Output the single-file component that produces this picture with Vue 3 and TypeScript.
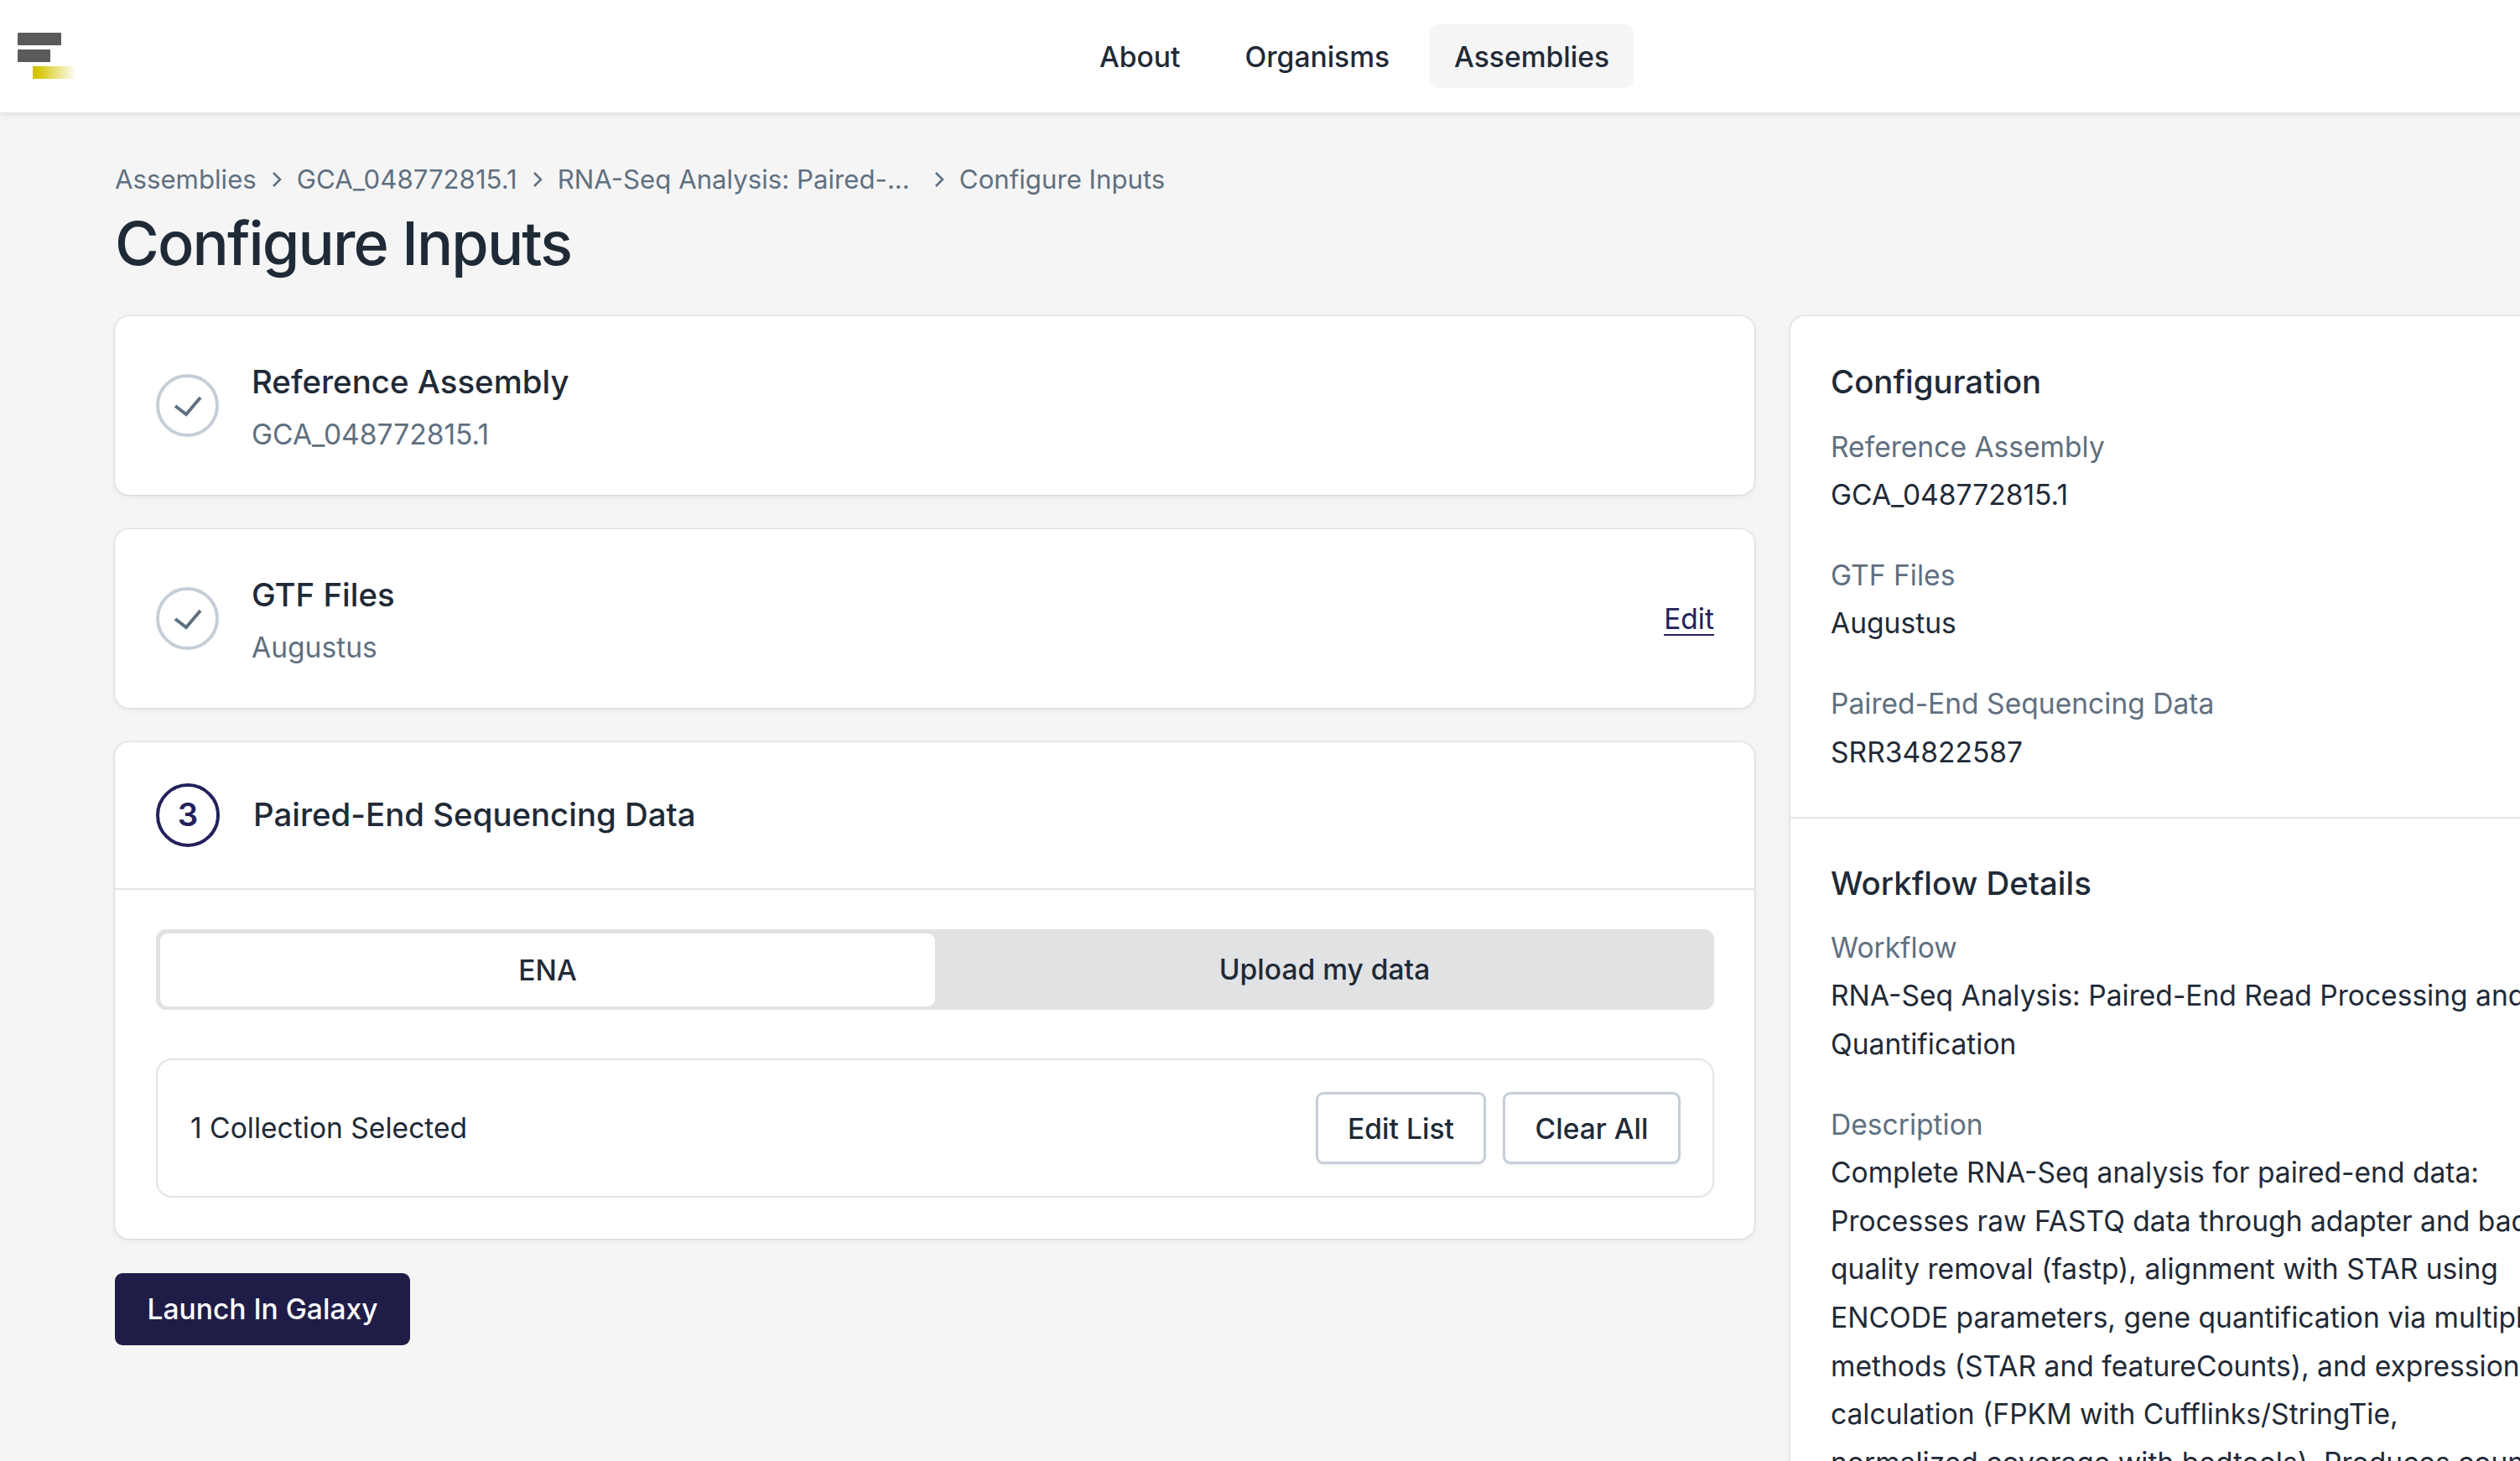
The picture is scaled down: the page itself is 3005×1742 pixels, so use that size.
<script setup lang="ts">
const navItems = [
  { label: 'About', active: false },
  { label: 'Organisms', active: false },
  { label: 'Assemblies', active: true }
]

const crumbs = ['Assemblies', 'GCA_048772815.1', 'RNA-Seq Analysis: Paired-...', 'Configure Inputs']

const doneSteps = [
  { title: 'Reference Assembly', value: 'GCA_048772815.1', editable: false },
  { title: 'GTF Files', value: 'Augustus', editable: true }
]

const configuration = [
  { label: 'Reference Assembly', value: 'GCA_048772815.1' },
  { label: 'GTF Files', value: 'Augustus' },
  { label: 'Paired-End Sequencing Data', value: 'SRR34822587' }
]

const details = [
  { label: 'Workflow', value: 'RNA-Seq Analysis: Paired-End Read Processing and Quantification' },
  {
    label: 'Description',
    value:
      'Complete RNA-Seq analysis for paired-end data: Processes raw FASTQ data through adapter and bad quality removal (fastp), alignment with STAR using ENCODE parameters, gene quantification via multiple methods (STAR and featureCounts), and expression calculation (FPKM with Cufflinks/StringTie, normalized coverage with bedtools). Produces count tables.'
  }
]
</script>

<template>
  <div class="page">
    <!-- Header -->
    <header class="topbar">
      <svg class="logo" width="72" height="57" viewBox="0 0 72 57">
        <defs>
          <linearGradient id="logo-fade" x1="0" x2="1" y1="0" y2="0">
            <stop offset="0.1" stop-color="#d4c400" />
            <stop offset="1" stop-color="#d4c400" stop-opacity="0" />
          </linearGradient>
        </defs>
        <rect x="0" y="0" width="52" height="15" rx="1" fill="#5a5a5c" />
        <rect x="0" y="20" width="39" height="15" rx="1" fill="#5a5a5c" />
        <rect x="18" y="40" width="52" height="15" rx="1" fill="url(#logo-fade)" />
      </svg>
      <nav class="nav">
        <a v-for="item in navItems" :key="item.label" :class="['nav-item', { active: item.active }]">{{ item.label }}</a>
      </nav>
    </header>

    <main class="content">
      <div class="breadcrumb">
        <template v-for="(crumb, i) in crumbs" :key="crumb">
          <span :class="['crumb', { truncated: i === 2 }]">{{ crumb }}</span>
          <svg v-if="i < crumbs.length - 1" class="chevron" width="12" height="20" viewBox="0 0 12 20">
            <path d="M2 2l8 8-8 8" fill="none" stroke="currentColor" stroke-width="2.6" />
          </svg>
        </template>
      </div>
      <h1 class="title">Configure Inputs</h1>

      <div class="columns">
        <section class="steps">
          <div v-for="step in doneSteps" :key="step.title" class="card step-done">
            <span class="check">
              <svg width="34" height="26" viewBox="0 0 34 26">
                <path d="M2 13l13 10L32 3" fill="none" stroke="currentColor" stroke-width="4" />
              </svg>
            </span>
            <div class="step-text">
              <div class="step-title">{{ step.title }}</div>
              <div class="step-value">{{ step.value }}</div>
            </div>
            <a v-if="step.editable" class="edit">Edit</a>
          </div>

          <div class="card">
            <div class="step-head">
              <span class="step-num">3</span>
              <span class="step-title">Paired-End Sequencing Data</span>
            </div>
            <div class="step-body">
              <div class="toggle">
                <div class="toggle-item on">ENA</div>
                <div class="toggle-item">Upload my data</div>
              </div>
              <div class="selection">
                <span>1 Collection Selected</span>
                <div class="selection-actions">
                  <button class="outline-btn edit-list">Edit List</button>
                  <button class="outline-btn clear-all">Clear All</button>
                </div>
              </div>
            </div>
          </div>

          <button class="launch">Launch In Galaxy</button>
        </section>

        <aside class="card side">
          <div class="side-block first">
            <h2 class="side-title">Configuration</h2>
            <dl class="side-list">
              <div v-for="row in configuration" :key="row.label">
                <dt>{{ row.label }}</dt>
                <dd>{{ row.value }}</dd>
              </div>
            </dl>
          </div>
          <div class="side-block bordered">
            <h2 class="side-title">Workflow Details</h2>
            <dl class="side-list">
              <div v-for="row in details" :key="row.label">
                <dt>{{ row.label }}</dt>
                <dd>{{ row.value }}</dd>
              </div>
            </dl>
          </div>
        </aside>
      </div>
    </main>
  </div>
</template>

<style>
html,
body {
  margin: 0;
  height: 1742px;
  overflow: hidden;
  background: #f5f5f5;
}
</style>

<style scoped>
.page {
  width: 3228px;
  height: 1742px;
  overflow: hidden;
  font-family: Inter, 'Liberation Sans', sans-serif;
  font-size: 33.6px;
  line-height: 57.6px;
  color: #1f2a37;
  background: #f5f5f5;
}

.topbar {
  display: flex;
  align-items: center;
  height: 134px;
  padding-left: 21px;
  background: #fff;
  box-shadow: 0 2px 8px rgba(0, 0, 0, 0.1);
}

.logo {
  display: block;
  margin-top: 1px;
}

.nav {
  display: flex;
  gap: 19px;
  margin-left: 1189px;
}

.nav-item {
  padding: 10px 29px 9px;
  border-radius: 11px;
  font-weight: 500;
}

.nav-item.active {
  background: #f5f5f5;
}

.content {
  padding: 56px 137px 0;
}

.breadcrumb {
  display: flex;
  align-items: center;
  gap: 18px;
  font-size: 31.2px;
  line-height: 48px;
  color: #5f7080;
}

.crumb.truncated {
  padding-right: 11px;
}

.chevron {
  flex: none;
}

.title {
  margin: 8px 0 0;
  font-size: 72px;
  line-height: 88px;
  letter-spacing: -1.9px;
  font-weight: 500;
  color: #1f2a37;
}

.columns {
  display: grid;
  grid-template-columns: 1955px 958px;
  gap: 43px;
  margin-top: 43px;
  align-items: start;
}

.steps {
  display: flex;
  flex-direction: column;
  align-items: stretch;
  gap: 41px;
}

.card {
  background: #fff;
  border-radius: 17px;
  box-shadow: 0 0 3px rgba(0, 0, 0, 0.2), 0 3px 8px rgba(0, 0, 0, 0.05);
}

.step-done {
  display: flex;
  align-items: center;
  gap: 39px;
  height: 213px;
  padding: 0 48px 0 49px;
  box-sizing: border-box;
}

.check {
  flex: none;
  display: flex;
  align-items: center;
  justify-content: center;
  width: 75px;
  height: 75px;
  box-sizing: border-box;
  border: 4px solid #c5ced8;
  border-radius: 50%;
  color: #5f7080;
}

.step-text {
  flex: 1;
  padding-top: 6px;
}

.step-title {
  font-size: 38.4px;
  font-weight: 500;
}

.step-value {
  margin-top: 4px;
  color: #5f7080;
}

.edit {
  color: #23215c;
  text-decoration: underline;
  text-decoration-thickness: 2px;
  text-underline-offset: 6px;
}

.step-head {
  display: flex;
  align-items: center;
  gap: 40px;
  height: 174px;
  padding: 0 49px;
  border-bottom: 2px solid #e2e3e5;
}

.step-num {
  flex: none;
  display: flex;
  align-items: center;
  justify-content: center;
  width: 76px;
  height: 76px;
  box-sizing: border-box;
  border: 4px solid #23215c;
  border-radius: 50%;
  font-size: 38.4px;
  font-weight: 600;
  color: #23215c;
}

.step-body {
  padding: 47px 48px 49px 49px;
}

.toggle {
  display: grid;
  grid-template-columns: 1fr 1fr;
  height: 96px;
  border-radius: 12px;
  background: #e1e2e4;
}

.toggle-item {
  display: flex;
  align-items: center;
  justify-content: center;
  font-weight: 500;
  border-radius: 9px;
}

.toggle-item.on {
  margin: 5px 0 4px 5px;
  background: #fff;
}

.selection {
  display: flex;
  align-items: center;
  justify-content: space-between;
  height: 166px;
  box-sizing: border-box;
  margin-top: 58px;
  padding: 0 38px 0 39px;
  border: 2px solid #e2e3e5;
  border-radius: 19px;
}

.selection-actions {
  display: flex;
  gap: 20px;
}

.outline-btn {
  height: 86px;
  box-sizing: border-box;
  border: 3px solid #c5ced8;
  border-radius: 9px;
  background: #fff;
  box-shadow: 0 2px 3px rgba(0, 0, 0, 0.06);
  font: 500 33.6px Inter, sans-serif;
  color: #1f2a37;
}

.edit-list {
  width: 203px;
}

.clear-all {
  width: 212px;
}

.launch {
  align-self: flex-start;
  width: 352px;
  height: 86px;
  padding-bottom: 2px;
  border: none;
  border-radius: 9px;
  background: #1f1d47;
  color: #fff;
  font: 500 33.6px Inter, sans-serif;
}

.side {
  overflow: hidden;
}

.side-block {
  padding: 49px 49px 49px 48px;
}

.side-block.first {
  padding-top: 50px;
}

.bordered {
  border-top: 2px solid #e2e3e5;
}

.side-title {
  margin: 0;
  font-size: 38.4px;
  line-height: 57.6px;
  font-weight: 500;
}

.side-list {
  margin: 19px 0 0;
}

.bordered .side-list {
  margin-top: 18px;
}

.side-list > div + div {
  margin-top: 38px;
}

dt {
  color: #5f7080;
}

dd {
  margin: 0;
}
</style>
